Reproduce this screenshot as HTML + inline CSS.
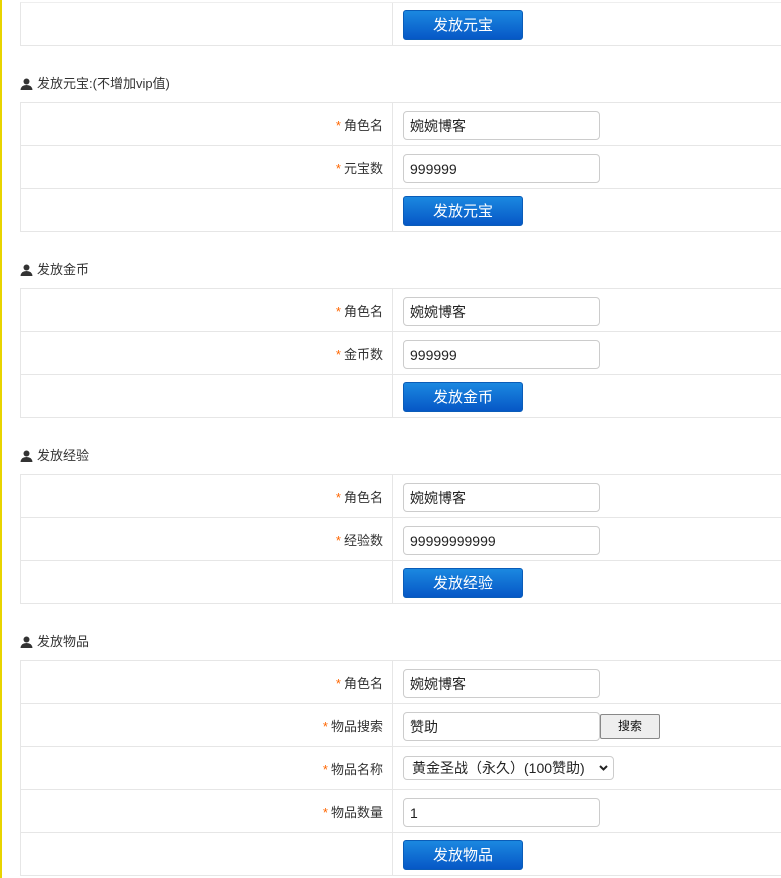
<!DOCTYPE html><html><head><meta charset="utf-8"><style>
body{margin:0;width:781px;height:878px;overflow:hidden;background:#fff;font-family:"Liberation Sans","Noto Sans CJK SC",sans-serif;position:relative}
.yb{position:absolute;left:0;top:0;width:2px;height:878px;background:#e8d400}
.tb{position:absolute;left:20px;width:780px;border-top:1px solid #e6e6e6;border-left:1px solid #e6e6e6}
.r{height:42px;border-bottom:1px solid #e6e6e6;position:relative}
.r:before{content:"";position:absolute;left:371px;top:0;bottom:0;width:1px;background:#e6e6e6}
.l{position:absolute;right:418px;top:12px;font-size:13px;color:#333;white-space:nowrap}
.l i{font-style:normal;color:#f60;margin-right:3px}
.in{position:absolute;left:382px;top:8px;border:1px solid #ccc;border-radius:4px;font-size:14px;line-height:29px;padding-left:6px;box-sizing:border-box;width:197px;height:29px;color:#222}
.bt{position:absolute;left:382px;top:7px;width:120px;height:30px;border-radius:3px;background:linear-gradient(#1b88e0,#0657c6);color:#fff;font-size:15px;text-align:center;line-height:30px;border:1px solid #0a5cb8;box-sizing:border-box}
.h{position:absolute;left:20px;font-size:13px;color:#333}
.h svg{vertical-align:-2px;margin-right:4px}
.sb{position:absolute;left:579px;top:10px;width:60px;height:25px;border:1px solid #888;border-radius:2px;background:#eee;font-size:12px;text-align:center;line-height:23px;box-sizing:border-box;color:#111}
.sel{position:absolute;left:382px;top:9px;width:211px;height:24px;border:1px solid #ccc;border-radius:4px;font-size:14px;line-height:22px;padding-left:8px;box-sizing:border-box;color:#222}
</style></head><body>
<div class="yb"></div>
<div class="tb" style="top:2px;border-top:1px solid #eee"><div class="r"><div class="bt">发放元宝</div></div></div>

<div class="h" style="top:73px"><svg width="13" height="12" viewBox="0 0 13 12"><circle cx="6.5" cy="3.5" r="3" fill="#333"/><path d="M0.5 12 Q1 7 6.5 7 Q12 7 12.5 12Z" fill="#333"/></svg>发放元宝:(不增加vip值)</div>
<div class="tb" style="top:102px">
<div class="r"><span class="l"><i>*</i>角色名</span><div class="in">婉婉博客</div></div>
<div class="r"><span class="l"><i>*</i>元宝数</span><div class="in">999999</div></div>
<div class="r"><div class="bt">发放元宝</div></div></div>

<div class="h" style="top:259px"><svg width="13" height="12" viewBox="0 0 13 12"><circle cx="6.5" cy="3.5" r="3" fill="#333"/><path d="M0.5 12 Q1 7 6.5 7 Q12 7 12.5 12Z" fill="#333"/></svg>发放金币</div>
<div class="tb" style="top:288px">
<div class="r"><span class="l"><i>*</i>角色名</span><div class="in">婉婉博客</div></div>
<div class="r"><span class="l"><i>*</i>金币数</span><div class="in">999999</div></div>
<div class="r"><div class="bt">发放金币</div></div></div>

<div class="h" style="top:445px"><svg width="13" height="12" viewBox="0 0 13 12"><circle cx="6.5" cy="3.5" r="3" fill="#333"/><path d="M0.5 12 Q1 7 6.5 7 Q12 7 12.5 12Z" fill="#333"/></svg>发放经验</div>
<div class="tb" style="top:474px">
<div class="r"><span class="l"><i>*</i>角色名</span><div class="in">婉婉博客</div></div>
<div class="r"><span class="l"><i>*</i>经验数</span><div class="in">99999999999</div></div>
<div class="r"><div class="bt">发放经验</div></div></div>

<div class="h" style="top:631px"><svg width="13" height="12" viewBox="0 0 13 12"><circle cx="6.5" cy="3.5" r="3" fill="#333"/><path d="M0.5 12 Q1 7 6.5 7 Q12 7 12.5 12Z" fill="#333"/></svg>发放物品</div>
<div class="tb" style="top:660px">
<div class="r"><span class="l"><i>*</i>角色名</span><div class="in">婉婉博客</div></div>
<div class="r"><span class="l"><i>*</i>物品搜索</span><div class="in">赞助</div><div class="sb">搜索</div></div>
<div class="r"><span class="l"><i>*</i>物品名称</span><div class="sel">黄金圣战（永久）(100赞助)<svg style="position:absolute;right:5px;top:8px" width="9" height="6" viewBox="0 0 9 6"><path d="M1 1L4.5 4.5L8 1" stroke="#222" stroke-width="2" fill="none"/></svg></div></div>
<div class="r"><span class="l"><i>*</i>物品数量</span><div class="in">1</div></div>
<div class="r"><div class="bt">发放物品</div></div></div>
</body></html>
